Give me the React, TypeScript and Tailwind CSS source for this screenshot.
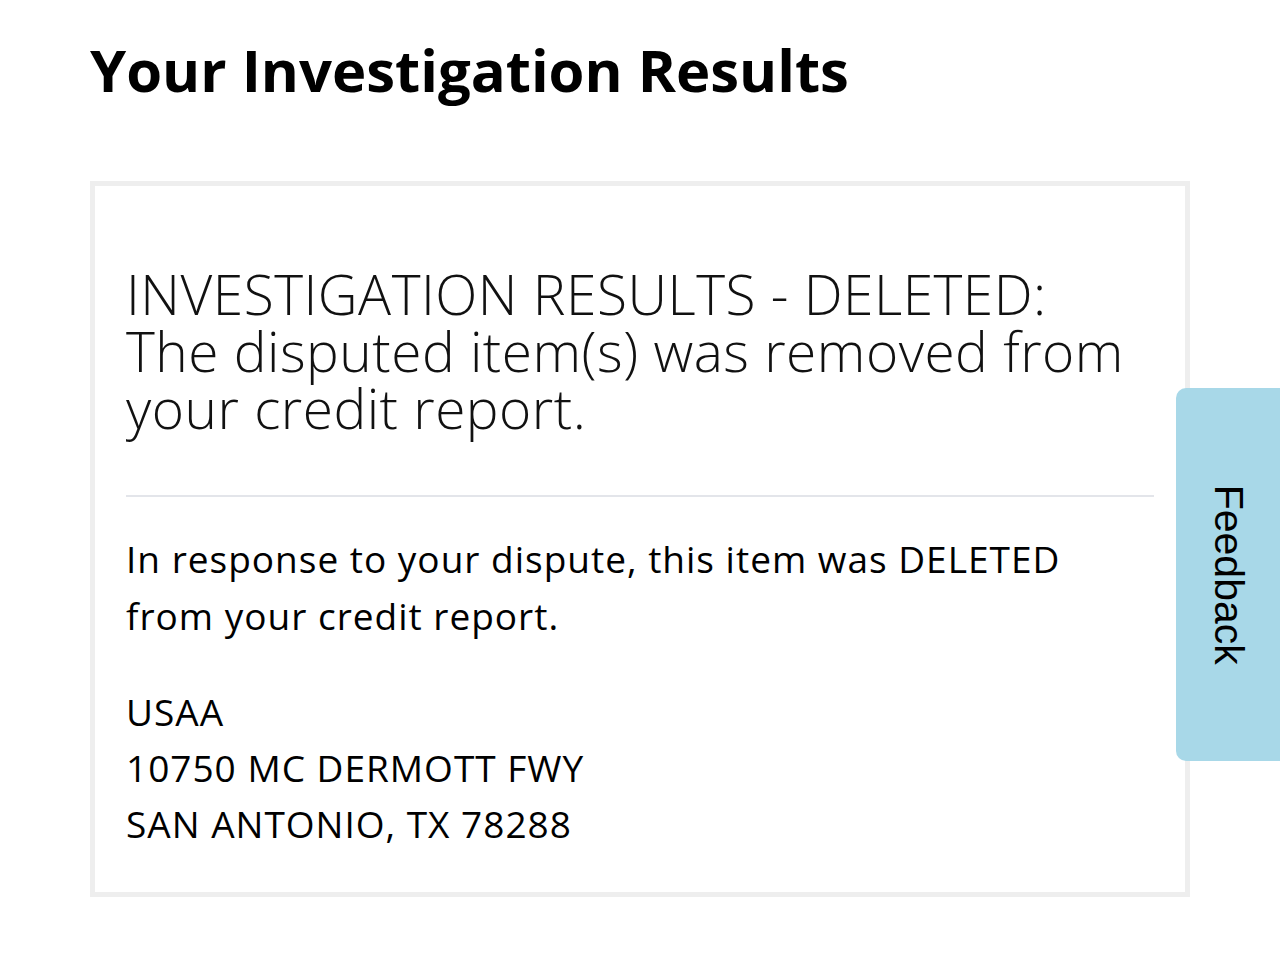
import React from 'react'

export default function App() {
  return (
    <div className="relative min-h-[958px] w-[1280px] overflow-hidden bg-white text-black font-['Open_Sans','Noto_Sans',sans-serif]">
      <div className="px-[90px] pt-[34px]">
        <h1 className="text-[58px] font-bold leading-[72px]">Your Investigation Results</h1>

        <div className="mt-[75px] w-[1100px] border-[5px] border-[#eeeeee] px-[31px] pt-[79px] pb-[40px]">
          <h2 className="text-[55px] font-light leading-[57px] tracking-[0.5px] text-[#111]">
            <span className="block">INVESTIGATION RESULTS - DELETED:</span>
            <span className="block">The disputed item(s) was removed from</span>
            <span className="block">your credit report.</span>
          </h2>
          <div className="mt-[59px] h-[2px] bg-[#e3e5ea]" />
          <p className="mt-[33px] text-[37px] leading-[57px] tracking-[1px]">
            <span className="block">In response to your dispute, this item was DELETED</span>
            <span className="block">from your credit report.</span>
          </p>
          <div className="mt-[40px] text-[37px] leading-[56px] tracking-[1px]">
            <div>USAA</div>
            <div>10750 MC DERMOTT FWY</div>
            <div>SAN ANTONIO, TX 78288</div>
          </div>
        </div>
      </div>

      <button className="absolute right-0 top-[388px] flex h-[373px] w-[104px] items-center justify-center rounded-l-[10px] bg-[#a8d8e8]">
        <span className="rotate-90 whitespace-nowrap font-['Liberation_Sans',Arial,sans-serif] text-[41px] text-black">Feedback</span>
      </button>
    </div>
  )
}
